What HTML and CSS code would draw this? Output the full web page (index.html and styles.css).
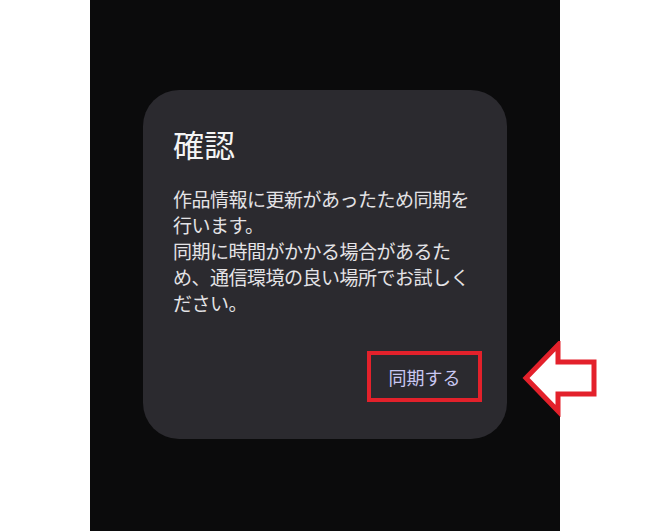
FILE: index.html
```html
<!DOCTYPE html>
<html lang="ja">
<head>
<meta charset="utf-8">
<title>確認</title>
<link rel="stylesheet" href="styles.css">
</head>
<body>
<div class="page">
  <div class="screen">
    <div class="dialog" role="dialog" aria-labelledby="dlg-title">
      <h1 class="dialog-title" id="dlg-title">確認</h1>
      <p class="dialog-body">作品情報に更新があったため同期を<br>行います。<br>同期に時間がかかる場合があるため、通信環境の良い場所でお試しください。</p>
      <div class="dialog-actions">
        <button class="action-btn" type="button">同期する</button>
      </div>
    </div>
  </div>
  <svg class="pointer-arrow" width="84" height="80" viewBox="0 0 84 80" aria-hidden="true">
    <polygon points="6,37 38,4 38,21 74,21 74,53 38,53 38,70" fill="#ffffff" stroke="#e3212b" stroke-width="5" stroke-linejoin="miter"/>
  </svg>
</div>
</body>
</html>
```

FILE: styles.css
```css
* {
  box-sizing: border-box;
}

html, body {
  margin: 0;
  padding: 0;
  background: #ffffff;
}

body {
  font-family: "Noto Sans CJK JP", "Noto Sans", sans-serif;
}

.page {
  position: relative;
  width: 662px;
  height: 531px;
  display: flex;
  padding-left: 90px;
}

.screen {
  width: 470px;
  height: 531px;
  background: #0b0b0c;
  padding-top: 90px;
  padding-left: 53px;
}

.dialog {
  width: 364px;
  height: 349px;
  background: #2b2a2f;
  border-radius: 36px;
  padding: 36px 25px 0 30px;
  display: flex;
  flex-direction: column;
}

.dialog-title {
  margin: 0;
  font-weight: 400;
  font-size: 31px;
  line-height: 36px;
  color: #f4f4f4;
}

.dialog-body {
  margin: 24px 0 0;
  width: 306px;
  font-size: 19px;
  letter-spacing: -0.5px;
  line-height: 26px;
  color: #e4e3e6;
  line-break: strict;
}

.dialog-actions {
  margin-top: auto;
  margin-bottom: 37px;
  display: flex;
  justify-content: flex-end;
}

.action-btn {
  width: 115px;
  height: 51px;
  border: 4px solid #e3212b;
  background: transparent;
  color: #c9c7f2;
  font-family: inherit;
  font-size: 18px;
  letter-spacing: 0;
  padding: 0;
  line-height: 1;
}

.pointer-arrow {
  position: absolute;
  left: 520px;
  top: 341px;
}
```
